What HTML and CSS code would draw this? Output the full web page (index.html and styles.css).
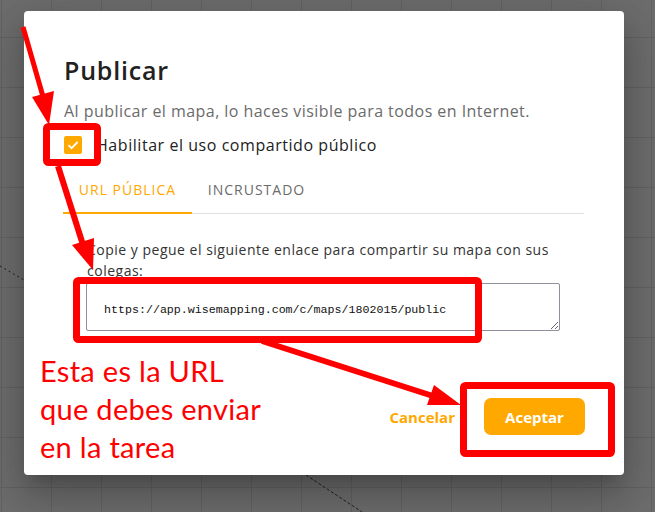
FILE: index.html
```html
<!DOCTYPE html>
<html lang="es">
<head>
    <meta charset="UTF-8">
    <meta name="viewport" content="width=device-width, initial-scale=1.0">
    <title>Publicar</title>
    <link rel="stylesheet" href="styles.css">
</head>
<body>
    <div class="canvas">
        <!-- conectores del mapa, detras del dialogo -->
        <svg class="map-lines" width="655" height="512">
            <line x1="0" y1="266" x2="24" y2="280" stroke="#222" stroke-width="1" stroke-dasharray="2 3"/>
            <line x1="306" y1="475" x2="362" y2="512" stroke="#222" stroke-width="1" stroke-dasharray="3 2"/>
        </svg>

        <div class="dialog">
            <h2 class="dialog-title">Publicar</h2>
            <p class="dialog-text">Al publicar el mapa, lo haces visible para todos en Internet.</p>

            <label class="check-row">
                <span class="checkbox">
                    <svg width="18" height="18" viewBox="0 0 18 18">
                        <path d="M4.5 9.2 L7.6 12.2 L13.6 6" fill="none" stroke="#fff" stroke-width="1.8"/>
                    </svg>
                </span>
                Habilitar el uso compartido público
            </label>

            <div class="tabs">
                <button class="tab active">URL PÚBLICA</button>
                <button class="tab">INCRUSTADO</button>
            </div>

            <div class="tab-panel">
                <p>Copie y pegue el siguiente enlace para compartir su mapa con sus colegas:</p>
                <textarea class="url-box" readonly>https://app.wisemapping.com/c/maps/1802015/public</textarea>
            </div>

            <div class="dialog-actions">
                <button class="btn-text">Cancelar</button>
                <button class="btn-primary">Aceptar</button>
            </div>
        </div>
    </div>

    <!-- anotaciones en rojo -->
    <svg class="annotations" width="655" height="512">
        <g fill="none" stroke="#ff0000" stroke-linejoin="round">
            <rect x="46.5" y="126.5" width="51" height="36" rx="2" stroke-width="7"/>
            <rect x="76.5" y="280.5" width="402" height="59" rx="2" stroke-width="7"/>
            <rect x="463.5" y="385.5" width="148" height="68" rx="2" stroke-width="7"/>
            <line x1="23" y1="27" x2="44" y2="100" stroke-width="5"/>
            <line x1="58" y1="166" x2="84" y2="248" stroke-width="6"/>
            <line x1="262" y1="341" x2="436" y2="397" stroke-width="6"/>
        </g>
        <g fill="#ff0000">
            <polygon points="32,97 54,91 49,125"/>
            <polygon points="72,245 94,238 93,270"/>
            <polygon points="434,385 427,405 461,405"/>
        </g>
    </svg>

    <div class="note">Esta es la URL<br>que debes enviar<br>en la tarea</div>
</body>
</html>
```

FILE: styles.css
```css
body {
    margin: 0;
    width: 655px;
    height: 512px;
    overflow: hidden;
    font-family: "Open Sans", Arial, sans-serif;
    position: relative;
}
.canvas {
    width: 655px;
    height: 512px;
    padding: 11px 0 0 24px;
    box-sizing: border-box;
    background-color: #6d6d6d;
    background-image:
        linear-gradient(to right, #626262 1px, transparent 1px),
        linear-gradient(to bottom, #626262 1px, transparent 1px);
    background-size: 50px 50px;
    background-position: 1px 37px;
    position: relative;
}
.map-lines {
    position: absolute;
    left: 0;
    top: 0;
}
.dialog {
    position: relative;
    width: 600px;
    height: 464px;
    box-sizing: border-box;
    padding: 43px 40px 0 40px;
    background: #fff;
    border-radius: 4px;
    box-shadow: 0 11px 15px -7px rgba(0, 0, 0, 0.2),
                0 24px 38px 3px rgba(0, 0, 0, 0.14),
                0 9px 46px 8px rgba(0, 0, 0, 0.12);
    display: flex;
    flex-direction: column;
}
.dialog-title {
    margin: 0;
    font-size: 25px;
    line-height: 32px;
    font-weight: 600;
    letter-spacing: 0.8px;
    color: #212121;
}
.dialog-text {
    margin: 13px 0 0 0;
    font-size: 16px;
    line-height: 24px;
    letter-spacing: 0.45px;
    color: #6b6b6b;
}
.check-row {
    display: flex;
    align-items: center;
    gap: 14px;
    margin-top: 10px;
    height: 24px;
    font-size: 16px;
    letter-spacing: 0.55px;
    color: #222;
}
.checkbox {
    width: 18px;
    height: 18px;
    border-radius: 2px;
    background: #ffa800;
    display: flex;
}
.tabs {
    display: flex;
    margin-top: 9px;
    margin-left: -1px;
    border-bottom: 1px solid #e0e0e0;
}
.tab {
    width: 129px;
    height: 48px;
    padding: 0;
    border: none;
    border-bottom: 2px solid transparent;
    background: none;
    font-family: inherit;
    font-size: 14px;
    font-weight: 500;
    letter-spacing: 1px;
    color: #6b6b6b;
    margin-bottom: -1px;
}
.tab.active {
    color: #ffa800;
    border-bottom-color: #ffa800;
}
.tab-panel {
    padding: 25px 23px 0 23px;
}
.tab-panel p {
    margin: 0;
    font-size: 14px;
    line-height: 21px;
    letter-spacing: 0.5px;
    color: #333;
}
.url-box {
    display: block;
    width: 474px;
    height: 48px;
    box-sizing: border-box;
    margin-top: 2px;
    margin-left: -1px;
    padding: 18px 16px 0 17px;
    border: 1px solid #8f8f9d;
    border-radius: 2px;
    font-family: "Liberation Mono", monospace;
    font-size: 11.65px;
    line-height: 16px;
    color: #111;
    outline: none;
}
.dialog-actions {
    display: flex;
    justify-content: flex-end;
    align-items: center;
    gap: 20px;
    margin-top: 67px;
    margin-right: -1px;
}
.btn-text {
    border: none;
    background: none;
    padding: 8px 9px;
    font-family: inherit;
    font-size: 15px;
    font-weight: 700;
    color: #ffa800;
}
.btn-primary {
    width: 101px;
    height: 37px;
    border: none;
    border-radius: 7px;
    background: #ffa800;
    color: #fff;
    font-family: inherit;
    font-size: 15px;
    font-weight: 700;
}
.annotations {
    position: absolute;
    left: 0;
    top: 0;
}
.note {
    position: absolute;
    left: 40px;
    top: 352px;
    font-family: Lato, sans-serif;
    font-size: 29px;
    line-height: 38px;
    letter-spacing: 0.3px;
    color: #ff0000;
}
```
